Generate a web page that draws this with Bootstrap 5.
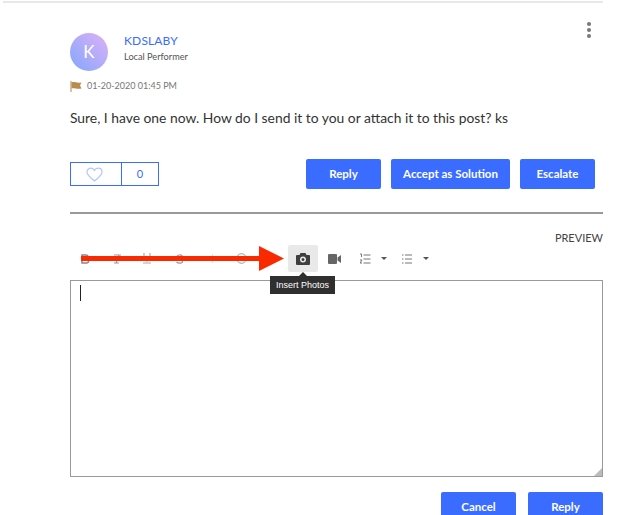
<!DOCTYPE html>
<html lang="en"><head><meta charset="utf-8"><title>Reply</title>
<link rel="stylesheet" href="https://cdn.jsdelivr.net/npm/bootstrap@5.3.0/dist/css/bootstrap.min.css">
<style>
html,body{height:515px;overflow:hidden;background:#fff}
body{font-family:Lato,"Liberation Sans",sans-serif;color:#333;position:relative}
.topline{height:2px;background:#e8e8e8;margin:1px 39px 0 3px}
.page{padding:0 39px 0 70px}
.postbody{position:relative;height:209px;padding-top:30px}
.avatar{width:38px;height:38px;border-radius:50%;background:linear-gradient(45deg,#94a9fb 20%,#d5b0f7 90%);color:#fff;font-size:17px;line-height:38px;text-align:center}
.uname{font-size:12px;line-height:16px;color:#3a6cff;letter-spacing:.15px}
.urank{font-size:9.2px;line-height:12px;color:#555;margin-top:2px}
.who{gap:16px}
.stamp{font-size:9px;color:#777;gap:5px;margin-top:8px;height:14px}
.msg{font-size:13.85px;line-height:20px;color:#333;margin:15px 0 0}
.dots{position:absolute;right:12px;top:19px;display:flex;flex-direction:column;gap:2px}
.dots i{width:4px;height:4px;border-radius:50%;background:#777;display:block}
.actions{margin-top:31px;align-items:center;justify-content:space-between;padding-right:8px}
.likebox{display:flex;width:89px;height:24px;border:1px solid #3a6cff;color:#3a6cff;font-size:11px;line-height:22px}
.likeheart{width:51px;border-right:1px solid #3a6cff;display:flex;align-items:center;justify-content:center;padding-right:3px}
.likecount{flex:1;text-align:center}
.btnblue{background:#3a6cff;border:0;border-radius:2px;color:#fff;font-size:11.5px;font-weight:700;height:30px;padding:0;width:75px;line-height:30px}
.btnblue:hover{background:#3a6cff;color:#fff}
.btnwide{width:119px}
.btngap{gap:10px}
.rule{height:2px;background:#999;opacity:1;margin:0;border:0}
.preview{font-size:11px;line-height:14px;color:#444;text-align:right;margin-top:17px}
.tools{position:relative;height:28px}
.tool{position:absolute;top:0;height:27px;display:flex;align-items:center;justify-content:center;color:#666}
.tool svg{display:block}
.photo{background:#e9e9e9;border-radius:2px;left:218px;width:30px}
.tip{position:absolute;left:200px;top:31px;width:65px;height:18px;background:#2f2f2f;color:#fff;font-size:9px;line-height:18px;text-align:center;font-family:"Liberation Sans",sans-serif;z-index:3}
.tip::before{content:"";position:absolute;left:29px;top:-4px;border:4px solid transparent;border-top:0;border-bottom-color:#2f2f2f}
.editbox{height:197px;border:1px solid #999;margin-top:7px;position:relative}
.caretbar{position:absolute;left:9px;top:4px;width:1px;height:16px;background:#222}
.grip{position:absolute;right:0;bottom:0}
.foot{gap:12px;justify-content:flex-end;margin-top:15px}
.redarrow{position:absolute;left:80px;top:245px;z-index:2}
</style></head>
<body>
<div class="topline"></div>
<div class="page">
  <div class="postbody">
    <div class="d-flex who">
      <div class="avatar">K</div>
      <div><div class="uname">KDSLABY</div><div class="urank">Local Performer</div></div>
    </div>
    <div class="d-flex align-items-center stamp">
      <svg width="12" height="11" viewBox="0 0 12 11"><path d="M.5 0h1v11h-1z" fill="#b38a4d"/><path d="M1.500 1.500c3-1.500 4 .8 10 0l-1.500 3 1.500 3c-5 1-7-1-10 0z" fill="#b98c4e"/></svg>
      <span>01-20-2020 01:45 PM</span>
    </div>
    <p class="msg">Sure, I have one now. How do I send it to you or attach it to this post? ks</p>
    <div class="dots"><i></i><i></i><i></i></div>
    <div class="d-flex actions">
      <div class="likebox">
        <div class="likeheart"><svg width="17" height="15" viewBox="0 0 18 16"><path d="M9 14.800C4 11 1 8.400 1 5.200 1 2.800 2.800 1.200 5 1.200c1.700 0 3.100.9 4 2.300.9-1.400 2.300-2.300 4-2.300 2.200 0 4 1.600 4 4 0 3.200-3 5.800-8 9.600z" fill="none" stroke="#b9c8fb" stroke-width="1.400"/></svg></div>
        <div class="likecount">0</div>
      </div>
      <div class="d-flex btngap">
        <button class="btn btnblue">Reply</button>
        <button class="btn btnblue btnwide">Accept as Solution</button>
        <button class="btn btnblue">Escalate</button>
      </div>
    </div>
  </div>
  <hr class="rule">
  <div class="preview">PREVIEW</div>
  <div class="tools">
    <div class="tool" style="left:9px;width:12px"><svg width="9" height="10" viewBox="0 0 9 10"><path d="M1 1h4a2 2 0 0 1 0 4H1zM1 5h4.500a2 2 0 0 1 0 4H1z" fill="none" stroke="#888" stroke-width="1.500"/></svg></div>
    <div class="tool" style="left:41px;width:12px"><svg width="9" height="10" viewBox="0 0 9 10"><path d="M1 1h7M6 1 3 9M1 9h5" fill="none" stroke="#999" stroke-width="1.200"/></svg></div>
    <div class="tool" style="left:71px;width:12px"><svg width="10" height="11" viewBox="0 0 10 11"><path d="M2 0v5a3 3 0 0 0 6 0V0M1 10h8" fill="none" stroke="#aaa" stroke-width="1.200"/></svg></div>
    <div class="tool" style="left:103px;width:12px"><svg width="9" height="10" viewBox="0 0 9 10"><path d="M7.500 2C6 .500 2 .500 2 3c0 3 5.500 1.500 5.500 4.500C7.500 9.500 3 9.500 1.500 8" fill="none" stroke="#999" stroke-width="1.200"/></svg></div>
    <div class="tool" style="left:136px;width:12px"><svg width="9" height="9" viewBox="0 0 9 9"><path d="M4.500 0v9M0 4.500h9" stroke="#ddd" stroke-width="1.200"/></svg></div>
    <div class="tool" style="left:165px;width:12px"><svg width="11" height="11" viewBox="0 0 11 11"><circle cx="5.500" cy="5.500" r="4.800" fill="none" stroke="#999"/><path d="M3 6.500c1 1.500 4 1.500 5 0" fill="none" stroke="#aaa"/></svg></div>
    <div class="tool photo"><svg width="14" height="12" viewBox="0 0 14 12"><path fill="#3f3f3f" fill-rule="evenodd" d="M4.500 0h5l1 2H13a1 1 0 0 1 1 1v8a1 1 0 0 1-1 1H1a1 1 0 0 1-1-1V3a1 1 0 0 1 1-1h2.500zM7 3.500a3 3 0 1 0 0 6 3 3 0 0 0 0-6zM7 5a1.500 1.500 0 1 1 0 3 1.500 1.500 0 0 1 0-3z"/></svg></div>
    <div class="tool" style="left:257px;width:14px"><svg width="13" height="10" viewBox="0 0 13 10"><path fill="#666" d="M1 0h7a1 1 0 0 1 1 1v8a1 1 0 0 1-1 1H1a1 1 0 0 1-1-1V1a1 1 0 0 1 1-1zM9.500 3.500 13 1v8L9.500 6.500z"/></svg></div>
    <div class="tool" style="left:289px;width:12px"><svg width="11" height="12" viewBox="0 0 11 12"><path d="M0 1h1.500v3M0 7h2L0 10h2M3.500 2h7M3.500 6h7M3.500 10h7" fill="none" stroke="#777"/></svg></div>
    <div class="tool" style="left:310px;width:8px"><svg width="6" height="3" viewBox="0 0 6 3"><path d="M0 0h6L3 3z" fill="#555"/></svg></div>
    <div class="tool" style="left:331px;width:12px"><svg width="10" height="10" viewBox="0 0 10 10"><path d="M0 1h1.500M0 5h1.500M0 9h1.500M3 1h7M3 5h7M3 9h7" fill="none" stroke="#777"/></svg></div>
    <div class="tool" style="left:352px;width:8px"><svg width="6" height="3" viewBox="0 0 6 3"><path d="M0 0h6L3 3z" fill="#555"/></svg></div>
    <div class="tip">Insert Photos</div>
  </div>
  <div class="editbox"><div class="caretbar"></div>
    <svg class="grip" width="8" height="8" viewBox="0 0 8 8"><path d="M0 8 8 0v8z" fill="#bbb"/></svg>
  </div>
  <div class="d-flex foot">
    <button class="btn btnblue">Cancel</button>
    <button class="btn btnblue">Reply</button>
  </div>
</div>
<svg class="redarrow" width="205" height="27" viewBox="0 0 205 27"><path d="M1 11h179v5H1z" fill="#fa2a00"/><path d="M179 1l25 12.500-25 12.500z" fill="#fa2a00"/></svg>
<script src="https://cdn.jsdelivr.net/npm/bootstrap@5.3.0/dist/js/bootstrap.bundle.min.js"></script>
</body></html>
